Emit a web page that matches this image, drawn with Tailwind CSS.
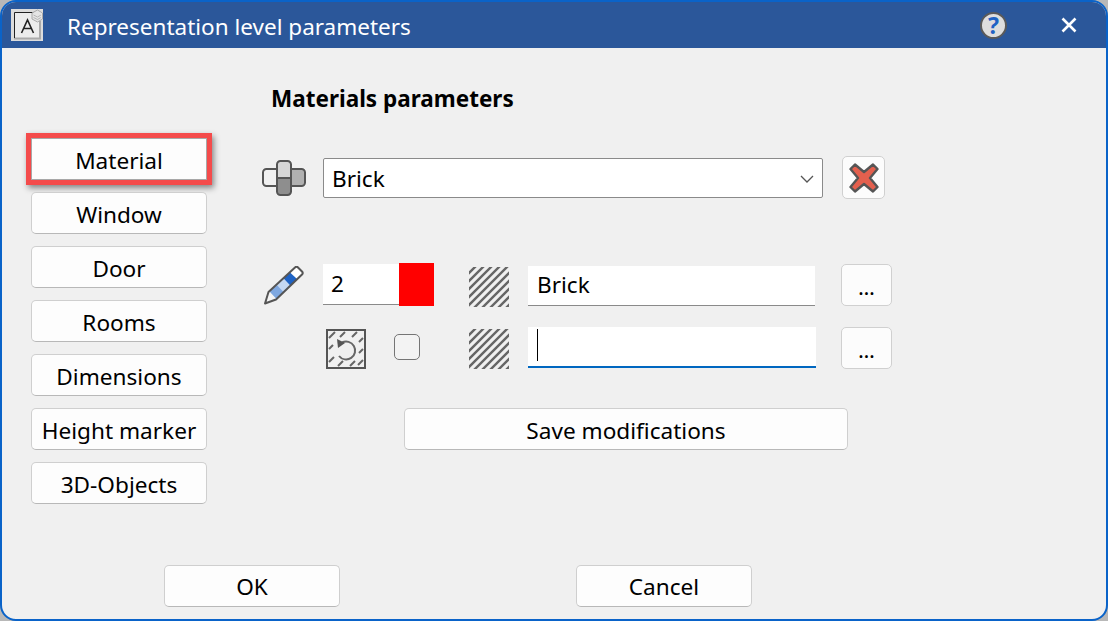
<!DOCTYPE html>
<html>
<head>
<meta charset="utf-8">
<script src="https://cdn.jsdelivr.net/npm/@tailwindcss/browser@4"></script>
</head>
<body class="bg-[#b8b8b8] overflow-hidden">
<div class="w-[1108px] h-[621px] flex flex-col border-2 border-[#0a63c9] rounded-[16px] overflow-hidden bg-[#f0f0f0] font-['Noto_Sans',sans-serif] text-[22.6px] text-black">
  <div class="h-[46px] shrink-0 bg-[#2b579a] flex items-center text-white">
    <div class="ml-[9px] w-[32px] h-[32px] bg-[#dcdcdc] shrink-0">
      <svg width="32" height="32" viewBox="0 0 32 32"><rect x="3" y="3" width="25" height="26" fill="#ececec"/><path d="M3 29.500H29V12" fill="none" stroke="#aaa" stroke-width="2"/><path d="M3.500 29V3.500H23" fill="none" stroke="#222"/><path d="M10.500 24L16.500 11L22.500 24M12.700 19.500H20.300" fill="none" stroke="#222" stroke-width="1.600"/><path d="M21 4L26.500 1L31.500 4V10L26.500 13L21 10Z" fill="#e4e4e4" stroke="#aaa"/><path d="M22.500 6L26.500 8L30 6M22.500 8.500L26.500 10.500L30 8.500" fill="none" stroke="#aaa" stroke-width=".8"/></svg>
    </div>
    <div class="ml-[24px] leading-none mt-[4px] text-[22.5px]">Representation level parameters</div>
    <div class="ml-auto w-[27px] h-[27px] rounded-full bg-[#dedede] border-2 border-[#5a5a5a] flex items-center justify-center text-[#1f63c4] text-[23px] font-bold leading-none">?</div>
    <svg class="ml-[54px] mr-[29px]" width="16" height="16" viewBox="0 0 16 16"><path d="M1.500 1.500L14.500 14.500M14.500 1.500L1.500 14.500" stroke="#fff" stroke-width="2.600"/></svg>
  </div>
  <div class="flex-1 flex flex-col">
    <div class="flex flex-1">
      <div class="ml-[29px] pt-[90px] w-[176px] flex flex-col gap-[12px] shrink-0">
        <div class="h-[42px] pt-[4px] bg-[#fdfdfd] border border-[#a8a8a8] flex items-center justify-center shadow-[0_0_0_5px_#f44b4b,2px_3px_6px_5px_rgba(0,0,0,0.45)]">Material</div>
        <div class="h-[42px] pt-[4px] bg-[#fdfdfd] border border-[#cfcfcf] border-b-[#b8b8b8] rounded-[5px] flex items-center justify-center">Window</div>
        <div class="h-[42px] pt-[4px] bg-[#fdfdfd] border border-[#cfcfcf] border-b-[#b8b8b8] rounded-[5px] flex items-center justify-center">Door</div>
        <div class="h-[42px] pt-[4px] bg-[#fdfdfd] border border-[#cfcfcf] border-b-[#b8b8b8] rounded-[5px] flex items-center justify-center">Rooms</div>
        <div class="h-[42px] pt-[4px] bg-[#fdfdfd] border border-[#cfcfcf] border-b-[#b8b8b8] rounded-[5px] flex items-center justify-center">Dimensions</div>
        <div class="h-[42px] pt-[4px] bg-[#fdfdfd] border border-[#cfcfcf] border-b-[#b8b8b8] rounded-[5px] flex items-center justify-center">Height marker</div>
        <div class="h-[42px] pt-[4px] bg-[#fdfdfd] border border-[#cfcfcf] border-b-[#b8b8b8] rounded-[5px] flex items-center justify-center">3D-Objects</div>
      </div>
      <div class="ml-[55px] flex flex-col">
        <div class="ml-[9px] mt-[36px] h-[30px] leading-[30px] font-bold text-[22.5px]">Materials parameters</div>
        <div class="mt-[42px] flex items-center h-[43px]">
          <svg class="shrink-0" width="44" height="36" viewBox="0 0 44 36">
            <rect x="1" y="9" width="17" height="17" rx="3.500" fill="#f0f0f0" stroke="#555" stroke-width="2"/>
            <rect x="26" y="9" width="17" height="17" rx="3.500" fill="#b0b0b0" stroke="#555" stroke-width="2"/>
            <path d="M15 18V4.500a3.500 3.500 0 0 1 3.500-3.500h7a3.500 3.500 0 0 1 3.500 3.500V18Z" fill="#d6d6d6" stroke="#555" stroke-width="2"/>
            <path d="M15 18V31.500a3.500 3.500 0 0 0 3.500 3.500h7a3.500 3.500 0 0 0 3.500-3.500V18Z" fill="#8e8e8e" stroke="#555" stroke-width="2"/>
          </svg>
          <div class="ml-[17px] w-[500px] h-[40px] pt-[2px] bg-white border border-[#8a8a8a] rounded-[2px] flex items-center pl-[8px]">Brick
            <svg class="ml-auto mr-[8px]" width="14" height="8" viewBox="0 0 14 8"><path d="M1 1L7 7L13 1" fill="none" stroke="#555" stroke-width="1.300"/></svg>
          </div>
          <div class="ml-[19px] w-[43px] h-[43px] bg-[#fcfcfc] border border-[#d0d0d0] rounded-[5px] flex items-center justify-center">
            <svg width="30" height="30" viewBox="0 0 30 30"><path d="M6 1.500L15 9L24 1.500L28.500 6L21 15L28.500 24L24 28.500L15 21L6 28.500L1.500 24L9 15L1.500 6Z" fill="#e4604e" stroke="#555" stroke-width="2.400" stroke-linejoin="round"/></svg>
          </div>
        </div>
        <div class="mt-[64px] flex items-center h-[43px]">
          <svg class="shrink-0 ml-[2px] mt-[2px]" width="40" height="39" viewBox="0 0 40 39">
            <path d="M32 1L39 7.500L33 13L26 6.500Z" fill="#fff"/>
            <path d="M26 6.500L33 13L26.500 20L19.500 12.500Z" fill="#1f63c4"/>
            <path d="M19.500 12.500L26.500 20L20 26.500L13 19Z" fill="#c5d8f2"/>
            <path d="M13 19L20 26.500L12.500 33L5.500 25.500Z" fill="#7fa8e0"/>
            <path d="M5 25.500L12 33L1 37.500Z" fill="#f4f4f4"/>
            <path d="M1 37.500L4.500 26L31 1.500C32 .5 33 .5 34 1.500L38 5.500C39 6.500 39 7.500 38 8.500L12 33.500Z" fill="none" stroke="#555" stroke-width="2" stroke-linejoin="round"/>
          </svg>
          <div class="ml-[19px] w-[76px] h-[41px] bg-white border-b border-[#8a8a8a] flex items-center pl-[8px]">2</div>
          <div class="w-[35px] h-[43px] bg-[#ff0000] shrink-0"></div>
          <svg class="ml-[35px] shrink-0 mt-[4px]" width="40" height="40" viewBox="0 0 40 40">
            <path d="M-2 8L8 -2M-2 16L16 -2M-2 24L24 -2M-2 32L32 -2M-2 40L40 -2M4 42L42 4M12 42L42 12M20 42L42 20M28 42L42 28M36 42L42 36" stroke="#666" stroke-width="2.400"/>
          </svg>
          <div class="ml-[19px] mt-[2px] w-[287px] h-[40px] bg-white border-b border-[#8a8a8a] flex items-center pl-[9px]">Brick</div>
          <div class="ml-[26px] w-[51px] h-[42px] bg-[#fcfcfc] border border-[#d0d0d0] rounded-[5px] flex items-center justify-center leading-none pt-[7px] text-[20px] font-medium">...</div>
        </div>
        <div class="mt-[20px] flex items-center h-[43px]">
          <svg class="ml-[64px] shrink-0 mt-[3px]" width="40" height="40" viewBox="0 0 40 40">
            <rect x="1" y="1" width="38" height="38" fill="#f0f0f0" stroke="#555" stroke-width="2"/>
            <path d="M3 9L9 3M19 3L14 8M31 3L26 8M37 9L33 13M3 20L7 16M37 20L33 24M3 33L8 28M37 31L32 36M12 37L17 32M24 37L29 32" stroke="#666" stroke-width="2"/>
            <path d="M16 13.500A9 9 0 1 1 13 27" fill="none" stroke="#666" stroke-width="2"/>
            <path d="M11 10L19 14L12 19Z" fill="#555"/>
          </svg>
          <div class="ml-[28px] mb-[1px] w-[26px] h-[26px] bg-[#f3f3f3] border-[1.500px] border-[#757575] rounded-[5px]"></div>
          <svg class="ml-[49px] shrink-0 mt-[3px]" width="40" height="40" viewBox="0 0 40 40">
            <path d="M-2 8L8 -2M-2 16L16 -2M-2 24L24 -2M-2 32L32 -2M-2 40L40 -2M4 42L42 4M12 42L42 12M20 42L42 20M28 42L42 28M36 42L42 36" stroke="#666" stroke-width="2.400"/>
          </svg>
          <div class="ml-[19px] w-[288px] h-[41px] bg-white border-b-2 border-[#0067c0] flex items-center pl-[9px]"><span class="w-[1px] h-[32px] bg-black mb-[3px]"></span></div>
          <div class="ml-[25px] w-[51px] h-[42px] bg-[#fcfcfc] border border-[#d0d0d0] rounded-[5px] flex items-center justify-center leading-none pt-[7px] text-[20px] font-medium">...</div>
        </div>
        <div class="mt-[39px] ml-[142px] w-[444px] h-[42px] pt-[4px] bg-[#fdfdfd] border border-[#cfcfcf] border-b-[#b8b8b8] rounded-[5px] flex items-center justify-center">Save modifications</div>
      </div>
    </div>
    <div class="pl-[162px] pb-[12px] flex gap-[236px]">
      <div class="w-[176px] h-[42px] pt-[2px] bg-[#fdfdfd] border border-[#cfcfcf] border-b-[#b8b8b8] rounded-[5px] flex items-center justify-center">OK</div>
      <div class="w-[176px] h-[42px] pt-[2px] bg-[#fdfdfd] border border-[#cfcfcf] border-b-[#b8b8b8] rounded-[5px] flex items-center justify-center">Cancel</div>
    </div>
  </div>
</div>
</body>
</html>
